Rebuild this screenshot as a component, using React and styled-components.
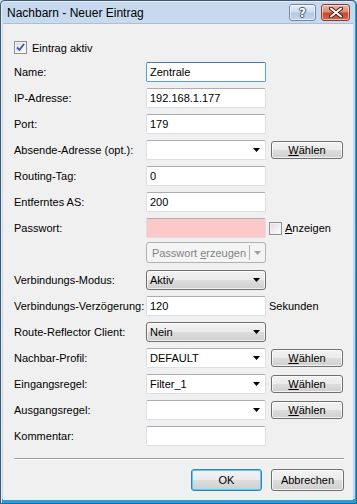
import React from "react";
import styled, { createGlobalStyle } from "styled-components";

const Global = createGlobalStyle`
  html, body { margin: 0; padding: 0; background: #c8daee; }
  body { font-family: "Liberation Sans", Arial, sans-serif; font-size: 11px; color: #000; }
  * { box-sizing: border-box; }
`;

const Window = styled.div`
  width: 357px;
  height: 504px;
  display: flex;
  flex-direction: column;
  border: 1px solid #3f5870;
  border-right-color: #1d6a9c;
  border-bottom-color: #1d6a9c;
  border-radius: 5px 5px 0 0;
  background: linear-gradient(to bottom, #c6d8ed 0, #c9dbef 30px, #c2d6ec calc(100% - 4px), #2a9ddc calc(100% - 4px));
  box-shadow: inset -1px 0 0 #2a9ddc, inset 1px 1px 0 #e6eef8;
`;

const TitleBar = styled.div`
  height: 22px;
  display: flex;
  align-items: flex-start;
  padding: 3px 6px 0 6px;
  flex: none;
`;

const Title = styled.div`
  font-size: 12px;
  line-height: 17px;
  color: #000;
  padding-top: 1px;
`;

const TitleButtons = styled.div`
  margin-left: auto;
  display: flex;
  gap: 5px;
`;

const CaptionButton = styled.div`
  width: ${(p) => p.$w}px;
  height: 17px;
  border-radius: 3px;
  border: 1px solid ${(p) => (p.$close ? "#8a3b2e" : "#7189a8")};
  background: ${(p) =>
    p.$close
      ? "linear-gradient(to bottom, #eab4a4 0, #dc8d77 45%, #c6492f 55%, #d2674c 100%)"
      : "linear-gradient(to bottom, #e4edf7 0, #cddcee 45%, #b3c9e3 55%, #c3d6ec 100%)"};
  box-shadow: inset 0 0 0 1px rgba(255, 255, 255, 0.55);
  display: flex;
  align-items: center;
  justify-content: center;
`;

const HelpGlyph = styled.span`
  font-family: "DejaVu Sans", sans-serif;
  font-weight: bold;
  font-size: 12px;
  line-height: 12px;
  color: #fff;
  text-shadow: -1px 0 #41556e, 1px 0 #41556e, 0 -1px #41556e, 0 1px #41556e;
`;

const Content = styled.div`
  flex: 1;
  margin: 0 3px 3px 2px;
  background: #f0f0f0;
  border-top: 1px solid #aebfd3;
  padding: 17px 9px 0 11px;
  display: flex;
  flex-direction: column;
`;

const CheckRow = styled.label`
  display: flex;
  align-items: center;
  gap: 5px;
  height: 13px;
  margin-bottom: 8px;
`;

const Box = styled.span`
  width: 13px;
  height: 13px;
  flex: none;
  border: 1px solid #8e8f8f;
  background: linear-gradient(135deg, #dcdcdc 0, #f4f4f4 70%, #ffffff 100%);
  box-shadow: inset 0 0 0 1px #f4f4f4;
  display: flex;
  align-items: center;
  justify-content: center;
`;

const Form = styled.div`
  display: grid;
  grid-template-columns: 127px 120px auto;
  column-gap: 5px;
  grid-auto-rows: 20px;
  row-gap: 6px;
  align-items: center;
`;

const Label = styled.div`
  grid-column: 1;
  line-height: 20px;
  white-space: nowrap;
`;

const Text = styled.div`
  grid-column: 2;
  height: 20px;
  border: 1px solid ${(p) => (p.$focus ? "#5a9fd6" : "#dbdfe6")};
  border-top-color: ${(p) => (p.$focus ? "#3d7bad" : "#abadb3")};
  border-radius: 2px;
  background: ${(p) => p.$bg || "#fff"};
  padding: 0 3px;
  line-height: 18px;
  display: flex;
  align-items: center;
`;

const Combo = styled(Text)`
  justify-content: space-between;
  padding-right: 5px;
`;

const Select = styled.div`
  grid-column: 2;
  height: 20px;
  border: 1px solid #707070;
  border-radius: 3px;
  background: linear-gradient(to bottom, #f2f2f2 0, #ebebeb 50%, #dddddd 50%, #cfcfcf 100%);
  box-shadow: inset 0 0 0 1px rgba(255, 255, 255, 0.7);
  padding: 0 5px 0 3px;
  display: flex;
  align-items: center;
  justify-content: space-between;
`;

const Button = styled.div`
  grid-column: ${(p) => p.$col || "auto"};
  width: ${(p) => p.$w}px;
  height: ${(p) => p.$h}px;
  justify-self: start;
  border: 1px solid ${(p) => (p.$default ? "#3c7fb1" : "#707070")};
  border-radius: 3px;
  background: linear-gradient(to bottom, #f2f2f2 0, #ebebeb 50%, #dddddd 50%, #cfcfcf 100%);
  box-shadow: inset 0 0 0 1px ${(p) => (p.$default ? "#48d1fa" : "rgba(255,255,255,0.75)")};
  display: flex;
  align-items: center;
  justify-content: center;
  color: #000;
`;

const U = styled.span`
  text-decoration: underline;
`;

const Side = styled.div`
  grid-column: 3;
  display: flex;
  align-items: center;
  gap: 3px;
  white-space: nowrap;
  margin-left: -2px;
`;

const SplitButton = styled.div`
  grid-column: 2;
  height: 21px;
  margin-top: -3px;
  border: 1px solid #adb2b5;
  border-radius: 3px;
  background: #f4f4f4;
  color: #838383;
  display: flex;
  align-items: center;
`;

const SplitLabel = styled.div`
  flex: 1;
  text-align: center;
  padding-left: 2px;
`;

const SplitArrow = styled.div`
  width: 16px;
  height: 15px;
  border-left: 1px solid #adb2b5;
  display: flex;
  align-items: center;
  justify-content: center;
`;

const Separator = styled.div`
  margin-top: 12px;
  height: 2px;
  border-top: 1px solid #a0a0a0;
  border-bottom: 1px solid #ffffff;
`;

const Footer = styled.div`
  margin-top: 9px;
  display: flex;
  justify-content: flex-end;
  gap: 9px;
`;

const Arrow = ({ color = "#000" }) => (
  <svg width="7" height="4" viewBox="0 0 7 4">
    <path d="M0 0H7L3.5 4Z" fill={color} />
  </svg>
);

const Check = () => (
  <svg width="9" height="9" viewBox="0 0 9 9">
    <path d="M1 4.5L3.5 7L8 1" fill="none" stroke="#3c55a6" strokeWidth="1.8" />
  </svg>
);

const CloseX = () => (
  <svg width="14" height="11" viewBox="0 0 14 11">
    <path d="M2 1.5L12 9.5M12 1.5L2 9.5" stroke="#4a2018" strokeWidth="4" strokeLinecap="round" />
    <path d="M2 1.5L12 9.5M12 1.5L2 9.5" stroke="#ffffff" strokeWidth="2" strokeLinecap="round" />
  </svg>
);

const Waehlen = () => (
  <Button $col={3} $w={72} $h={18}>
    <span>
      <U>W</U>ählen
    </span>
  </Button>
);

export default function App() {
  return (
    <>
      <Global />
      <Window>
        <TitleBar>
          <Title>Nachbarn - Neuer Eintrag</Title>
          <TitleButtons>
            <CaptionButton $w={27}>
              <HelpGlyph>?</HelpGlyph>
            </CaptionButton>
            <CaptionButton $w={29} $close>
              <CloseX />
            </CaptionButton>
          </TitleButtons>
        </TitleBar>
        <Content>
          <CheckRow>
            <Box>
              <Check />
            </Box>
            Eintrag aktiv
          </CheckRow>
          <Form>
            <Label>Name:</Label>
            <Text $focus>Zentrale</Text>

            <Label>IP-Adresse:</Label>
            <Text>192.168.1.177</Text>

            <Label>Port:</Label>
            <Text>179</Text>

            <Label>Absende-Adresse (opt.):</Label>
            <Combo>
              <span />
              <Arrow />
            </Combo>
            <Waehlen />

            <Label>Routing-Tag:</Label>
            <Text>0</Text>

            <Label>Entferntes AS:</Label>
            <Text>200</Text>

            <Label>Passwort:</Label>
            <Text $bg="#ffc8c8" />
            <Side>
              <Box />
              <span>
                <U>A</U>nzeigen
              </span>
            </Side>

            <SplitButton>
              <SplitLabel>
                Passwort <U>e</U>rzeugen
              </SplitLabel>
              <SplitArrow>
                <Arrow color="#a0a0a0" />
              </SplitArrow>
            </SplitButton>

            <Label>Verbindungs-Modus:</Label>
            <Select>
              Aktiv
              <Arrow />
            </Select>

            <Label>Verbindungs-Verzögerung:</Label>
            <Text>120</Text>
            <Side>Sekunden</Side>

            <Label>Route-Reflector Client:</Label>
            <Select>
              Nein
              <Arrow />
            </Select>

            <Label>Nachbar-Profil:</Label>
            <Combo>
              DEFAULT
              <Arrow />
            </Combo>
            <Waehlen />

            <Label>Eingangsregel:</Label>
            <Combo>
              Filter_1
              <Arrow />
            </Combo>
            <Waehlen />

            <Label>Ausgangsregel:</Label>
            <Combo>
              <span />
              <Arrow />
            </Combo>
            <Waehlen />

            <Label>Kommentar:</Label>
            <Text />
          </Form>
          <Separator />
          <Footer>
            <Button $default $w={71} $h={22}>
              OK
            </Button>
            <Button $w={73} $h={22}>
              Abbrechen
            </Button>
          </Footer>
        </Content>
      </Window>
    </>
  );
}
